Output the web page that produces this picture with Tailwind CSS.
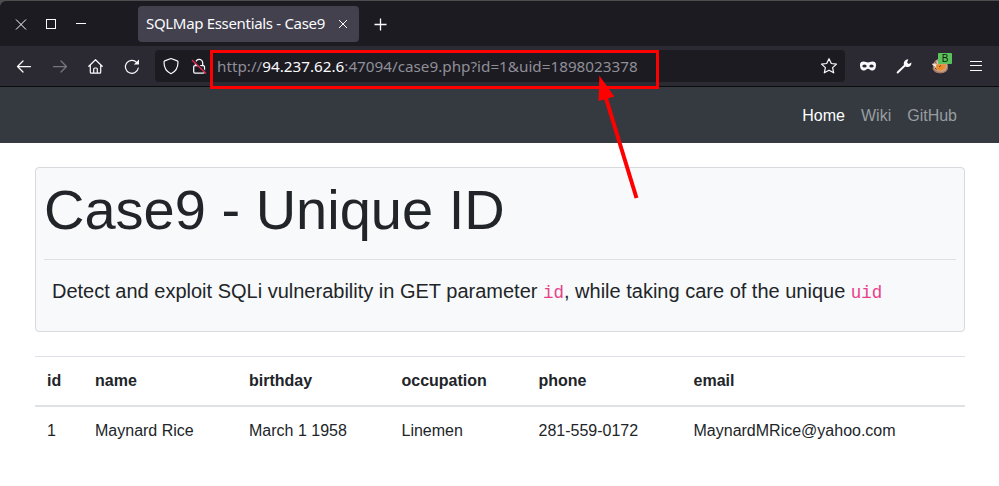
<!DOCTYPE html>
<html lang="en">
<head>
<meta charset="utf-8">
<title>SQLMap Essentials - Case9</title>
<script src="https://cdn.jsdelivr.net/npm/@tailwindcss/browser@4"></script>
</head>
<body class="relative w-[999px] h-[486px] overflow-hidden bg-white text-[#212529] font-['Liberation_Sans',sans-serif]">
<div class="bg-[#4b4e4c] pt-px font-['Noto_Sans',sans-serif]">
  <!-- Tab strip -->
  <div class="flex h-[45px] items-center rounded-tl-md bg-[#1c1b22] pl-1.5 text-[#fbfbfe]">
    <div class="flex w-[132px]">
      <svg class="w-[30px] h-5" viewBox="0 0 30 20" fill="none" stroke="currentColor" stroke-width="1"><path d="M10 5.500l10 10M20 5.500l-10 10"/></svg>
      <svg class="w-[30px] h-5" viewBox="0 0 30 20" fill="none" stroke="currentColor" stroke-width="1" shape-rendering="crispEdges"><path d="M10.500 5.500h9v9h-9z"/></svg>
      <svg class="w-[30px] h-5" viewBox="0 0 30 20" fill="none" stroke="currentColor" stroke-width="1" shape-rendering="crispEdges"><path d="M10 9.500h10"/></svg>
    </div>
    <div class="flex h-9 w-[221px] items-center rounded-[4px] bg-[#42414d] pl-2">
      <span class="w-[188px] whitespace-nowrap text-[15px] tracking-[-0.32px]">SQLMap Essentials - Case9</span>
      <svg class="w-[18px] h-5" viewBox="0 0 18 20" fill="none" stroke="currentColor" stroke-width="1"><path d="M5 6l8 8M13 6l-8 8"/></svg>
    </div>
    <svg class="ml-[11px] w-5 h-5" viewBox="0 0 20 20" fill="none" stroke="currentColor" stroke-width="1.300"><path d="M4.500 10.500h12M10.500 4.500v12"/></svg>
  </div>
  <!-- Toolbar -->
  <div class="flex h-[41px] items-center border-b border-[#0c0c0d] bg-[#2b2a33] pl-1.5 text-[#fbfbfe]">
    <svg class="w-9 h-6" viewBox="0 0 36 24" fill="none" stroke="currentColor" stroke-width="1.250" stroke-linecap="round" stroke-linejoin="round"><path d="M24.500 12.500h-13M17 7l-5.500 5.500L17 18"/></svg>
    <svg class="w-9 h-6 text-[#77767e]" viewBox="0 0 36 24" fill="none" stroke="currentColor" stroke-width="1.250" stroke-linecap="round" stroke-linejoin="round"><path d="M11.500 12.500h13M19 7l5.500 5.500L19 18"/></svg>
    <svg class="w-9 h-6" viewBox="0 0 36 24" fill="none" stroke="currentColor" stroke-width="1.200" stroke-linecap="round" stroke-linejoin="round"><path d="M10.800 12.300l6.700-6.600 6.700 6.600M12.300 11v7.200q0 1 1 1h8.400q1 0 1-1V11M15.700 19v-4q0-1 1-1h1.600q1 0 1 1v4"/></svg>
    <svg class="w-9 h-6" viewBox="0 0 36 24" fill="none" stroke="currentColor" stroke-width="1.200" stroke-linecap="round"><path d="M22.600 8.300A6.500 6.500 0 1 0 24.300 14"/><path d="M25 5.500v5h-5.200z" fill="currentColor" stroke="none"/></svg>
    <div class="ml-[5px] flex h-8 w-[690px] items-center rounded-[4px] bg-[#1c1b22] pl-1">
      <svg class="w-6 h-6" viewBox="0 0 24 24" fill="none" stroke="currentColor" stroke-width="1.200" stroke-linejoin="round"><path d="M12 4.500l6.300 2.400q.7.300.7 1.100c0 5-1.600 9.400-7 11.700C6.600 17.400 5 13 5 8q0-.8.700-1.100z"/></svg>
      <svg class="ml-1 w-6 h-6" viewBox="0 0 24 24" fill="none" stroke="currentColor" stroke-width="1.250"><path d="M8.500 11.500V9a3.600 3.600 0 0 1 7.200 0v2.500"/><rect x="6.700" y="11.500" width="10.800" height="7.500" rx="1.300"/><path d="M5.800 5.200l13.200 13" stroke="#1c1b22" stroke-width="1.600"/><path d="M5 6l14 13.500" stroke="#e22850" stroke-width="1.400"/></svg>
      <span class="ml-[6px] w-[600px] whitespace-nowrap text-[15.250px] text-[#8f8f97]">http://<span class="text-[#fbfbfe]">94.237.62.6</span>:47094/case9.php?id=1&amp;uid=1898023378</span>
      <svg class="w-6 h-6" viewBox="0 0 24 24" fill="none" stroke="currentColor" stroke-width="1.200" stroke-linejoin="round"><path d="M12 4.700l2.300 4.800 5.200.6-3.900 3.500 1.100 5.200-4.700-2.600-4.700 2.600 1.100-5.200-3.900-3.500 5.200-.6z"/></svg>
    </div>
    <svg class="ml-[5px] w-9 h-6" viewBox="0 0 36 24"><path d="M10 10.500C10 8.500 11.500 7.500 13.500 7.500c2 0 3 .9 4.500.9s2.500-.9 4.500-.9c2 0 3.500 1 3.500 3 0 3.700-1 6-4 6-2 0-2.500-1.700-4-1.700s-2 1.700-4 1.700c-3 0-4-2.300-4-6z" fill="currentColor"/><ellipse cx="14.500" cy="12" rx="2.200" ry="1.600" fill="#2b2a33"/><ellipse cx="21.500" cy="12" rx="2.200" ry="1.600" fill="#2b2a33"/></svg>
    <svg class="w-9 h-6" viewBox="0 0 36 24"><path d="M11.600 18.500l7.500-7.300" stroke="currentColor" stroke-width="1.900" stroke-linecap="round"/><path d="M22.300 5.200l-1.200 3.300 1.500 1.500 2.800-1.600c.3 3-1.700 5-4.700 4.500-2.600-.4-3.500-2.500-2.700-4.700.7-2 2.500-3 4.300-3z" fill="currentColor"/></svg>
    <div class="relative w-9 h-6">
      <svg class="w-9 h-6" viewBox="0 0 36 24"><circle cx="18.500" cy="12" r="7.300" fill="#c9a68b"/><path d="M11 13.500q1 5 7.500 5t7-5" fill="none" stroke="#a87963" stroke-width="1.300"/><path d="M10.500 10l3.500 2 1-4" fill="none" stroke="#f6e9dd" stroke-width="1.500"/><path d="M14 10.500h10l-1.500 4.500q-4 2.500-8 .5z" fill="#ee8b2b"/><path d="M12 7l3 2.500M17 13l2-1.500M13 14l1.500 1.500" stroke="#694536" stroke-width="1" fill="none"/></svg>
      <span class="absolute left-4 -top-px flex h-[11px] w-3.5 items-center justify-center rounded-[1px] bg-[#5bc15b] font-['Liberation_Sans',sans-serif] text-[10px] leading-none text-[#10200f]">B</span>
    </div>
    <svg class="w-9 h-6" viewBox="0 0 36 24" stroke="currentColor" stroke-width="1.100"><path d="M12 7.500h12M12 11.500h12M12 16.500h12"/></svg>
  </div>
</div>
<!-- Site navigation -->
<nav class="flex h-14 items-center justify-end gap-4 bg-[#343a40] pt-0.5 pr-[42px] text-base text-[#999da0]">
  <a class="text-white">Home</a><a>Wiki</a><a>GitHub</a>
</nav>
<main class="px-[35px] pt-6 pr-[34px]">
  <section class="h-[165px] rounded-[4px] border border-[#d7d9dc] bg-[#f8f9fa] p-2">
    <h1 class="text-[56px] leading-[67px]">Case9 - Unique ID</h1>
    <hr class="my-4 border-[#dfe0e1]">
    <p class="px-2 text-xl leading-[30px]">Detect and exploit SQLi vulnerability in GET parameter <code class="font-['Liberation_Mono',monospace] text-[17.5px] text-[#e83e8c]">id</code>, while taking care of the unique <code class="font-['Liberation_Mono',monospace] text-[17.5px] text-[#e83e8c]">uid</code></p>
  </section>
  <div class="mt-6 text-base leading-6">
    <div class="grid h-[51px] grid-cols-[48px_154px_152.500px_137px_155px_1fr] border-t border-b-2 border-t-[#dee2e6] border-b-[#dee2e6] pt-3 font-bold *:pl-3">
      <span>id</span><span>name</span><span>birthday</span><span>occupation</span><span>phone</span><span>email</span>
    </div>
    <div class="grid grid-cols-[48px_154px_152.500px_137px_155px_1fr] pt-3 *:pl-3">
      <span>1</span><span>Maynard Rice</span><span>March 1 1958</span><span>Linemen</span><span>281-559-0172</span><span>MaynardMRice@yahoo.com</span>
    </div>
  </div>
</main>
<!-- Annotation: box round the address and arrow pointing at the uid -->
<div class="absolute left-[210px] top-[50px] h-[39px] w-[449px] border-3 border-[#ff0000]"></div>
<svg class="absolute left-[590px] top-[70px] h-[135px] w-[55px]" viewBox="590 70 55 135"><path d="M605 95L636.500 198" stroke="#ff0000" stroke-width="4"/><path d="M599.300 75.500L614.300 96.500L598.500 101z" fill="#ff0000"/></svg>
</body>
</html>
